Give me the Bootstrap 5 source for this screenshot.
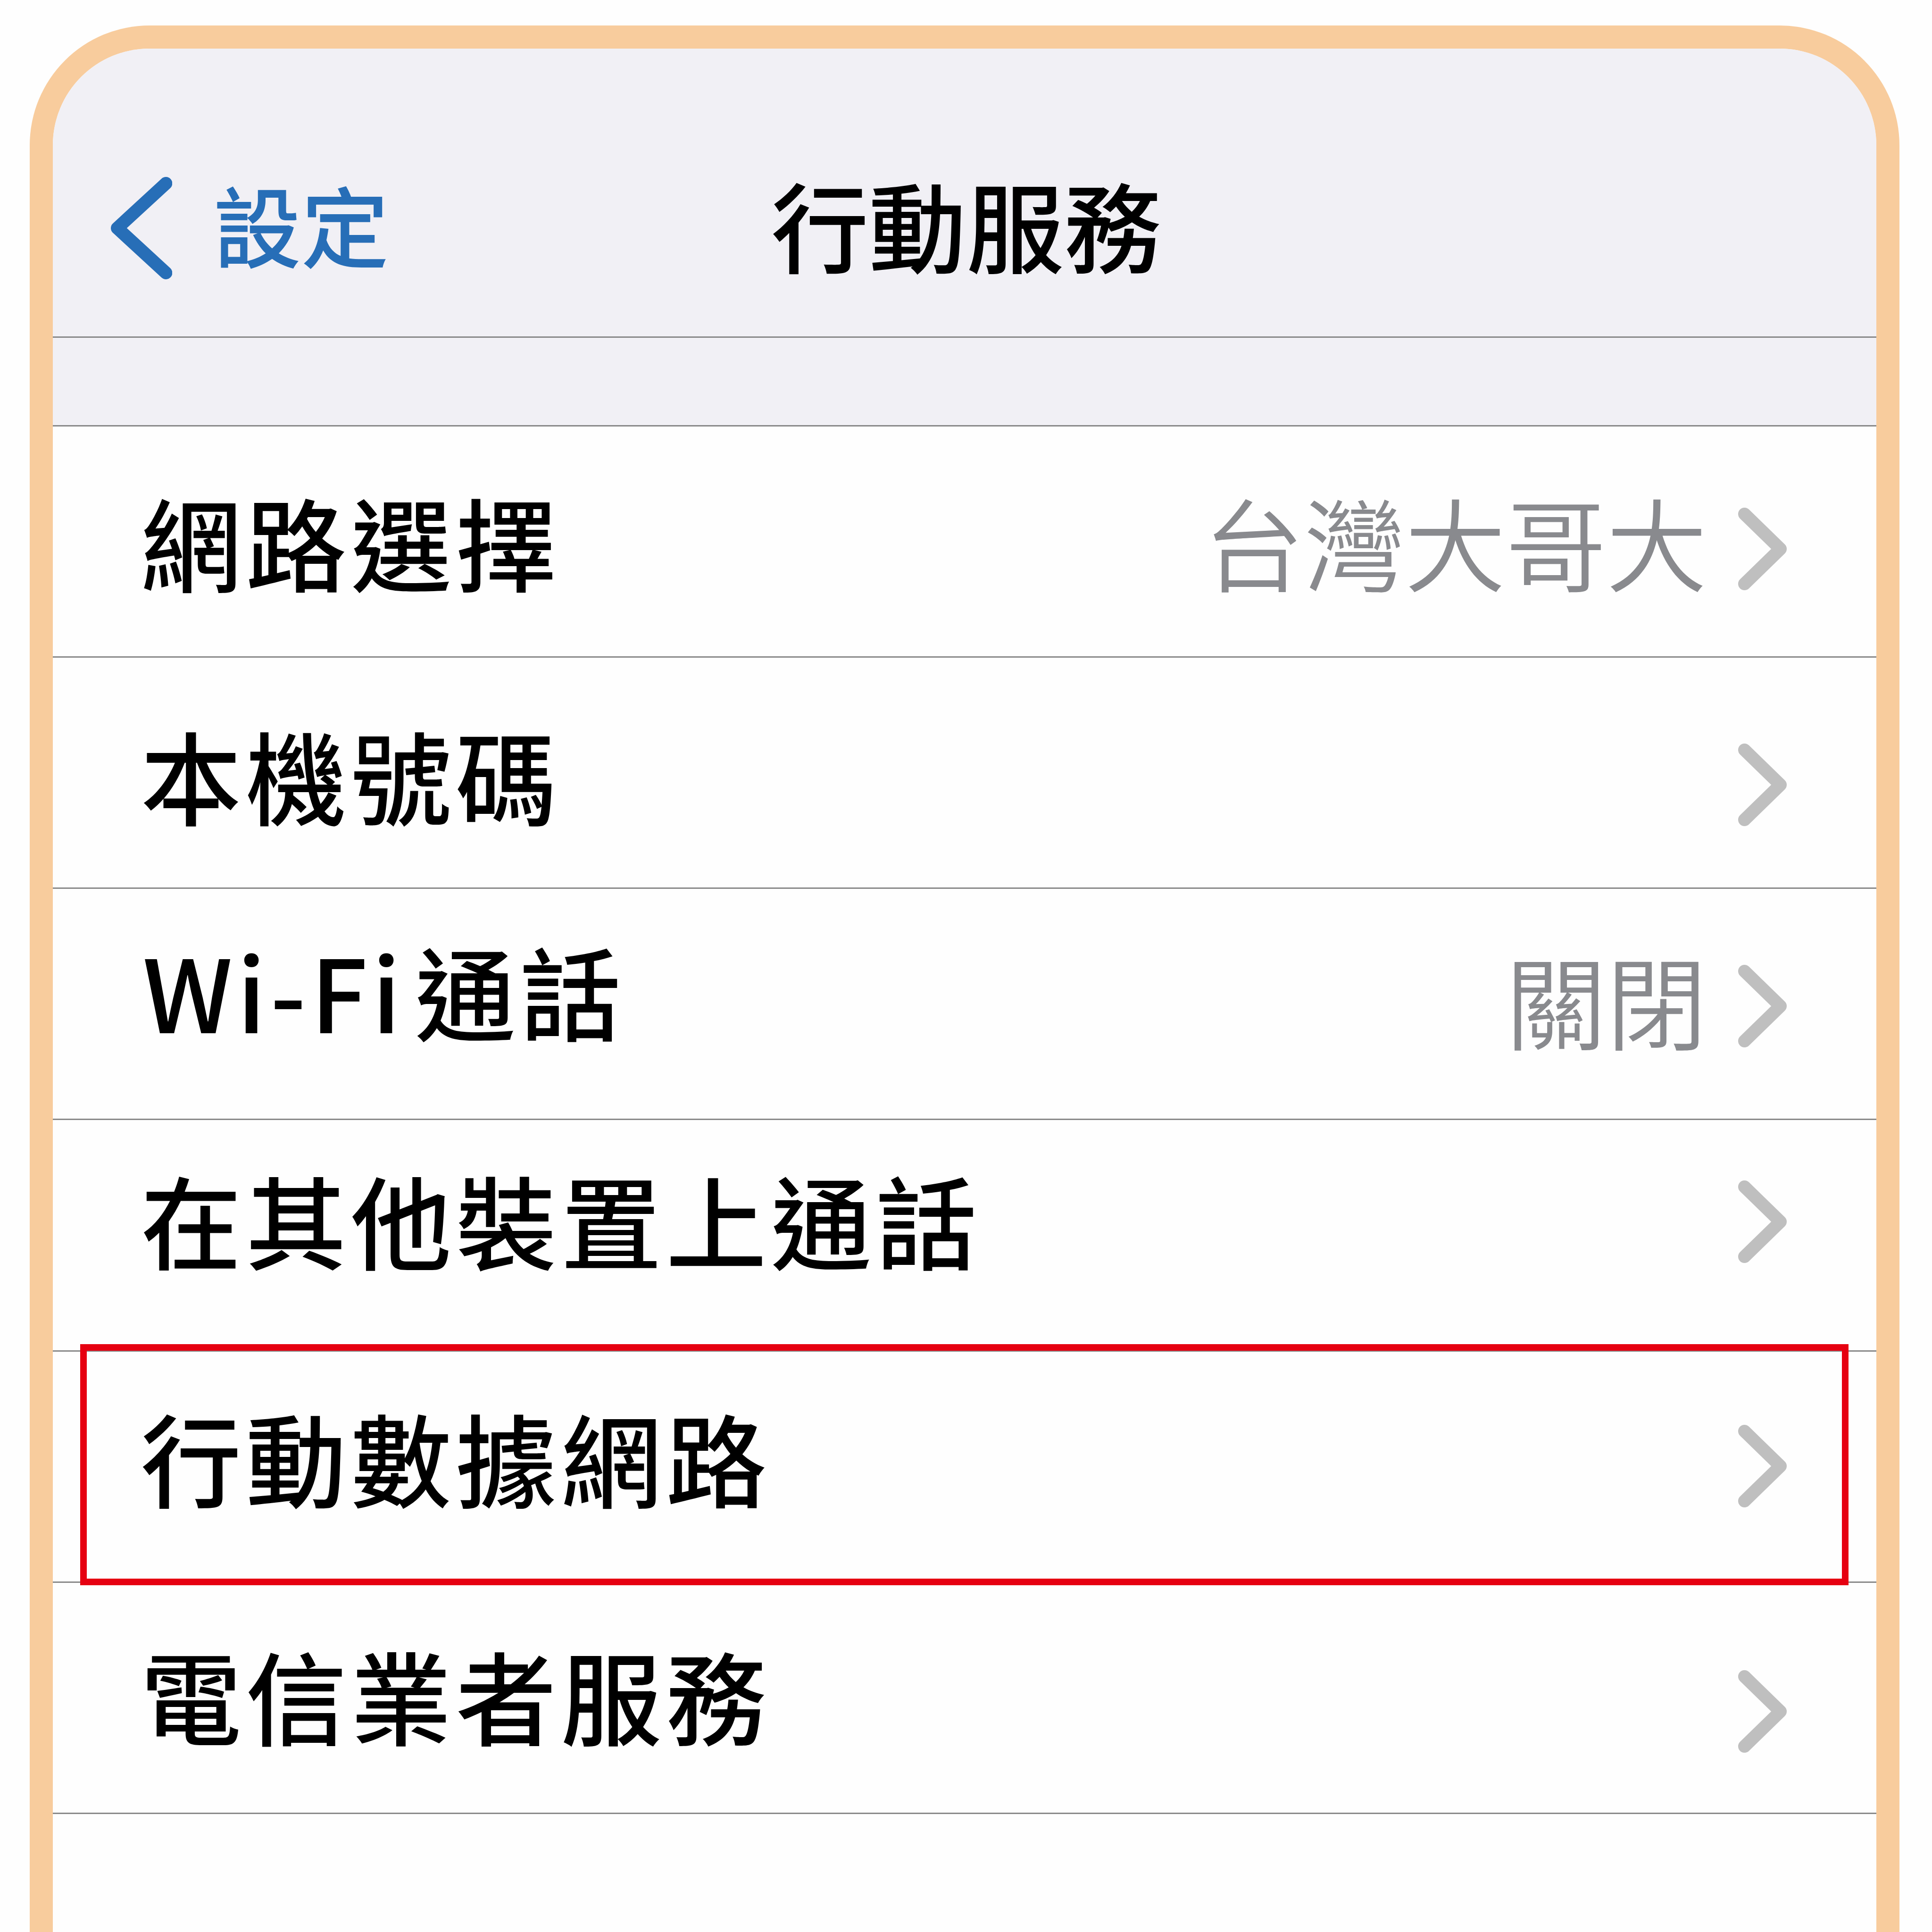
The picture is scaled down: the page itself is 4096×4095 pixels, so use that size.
<!DOCTYPE html>
<html lang="zh-Hant">
<head>
    <meta charset="UTF-8">
    <meta name="viewport" content="width=device-width, initial-scale=1.0">
    <title>行動服務</title>
    <!-- Bootstrap CSS -->
    <link href="https://cdn.jsdelivr.net/npm/bootstrap@5.3.0/dist/css/bootstrap.min.css" rel="stylesheet">
    <style>
        body {
            height: 4095px;
            background: #fefefe;
            font-family: "Noto Sans CJK TC", sans-serif;
            color: #000;
            line-height: 1;
        }
        .phone {
            height: 4200px;
            margin: 54.4px 69.5px 0 63.2px;
            border: 49.2px solid #f8cc9d;
            border-bottom: 0;
            border-radius: 254px 254px 0 0;
            background: #fefefe;
        }
        .topbar {
            height: 612.5px;
            background: #f1f0f5;
            border-bottom: 3px solid #898989;
            border-radius: 205px 205px 0 0;
        }
        .side { flex: 1 1 0; }
        .back-link {
            color: #276eb7;
            font-size: 186px;
            font-weight: 500;
        }
        .back-link svg { margin: 271.5px 0 0 122.8px; }
        .back-link span { margin: 277px 0 0 87px; }
        .page-title {
            font-size: 207px;
            font-weight: 500;
            margin: 267px 0 0 8px;
        }
        .band {
            height: 188px;
            background: #f1f0f5;
            border-bottom: 3px solid #898989;
        }
        .setting {
            height: 490.2px;
            padding: 0 189.3px 0 186px;
            background: #fefefe;
            color: #000;
            border: 0 solid #898989;
            border-bottom-width: 3px !important;
            font-size: 213.6px;
        }
        .setting-name {
            font-weight: 500;
            letter-spacing: 9.1px;
            margin-top: var(--name-y);
        }
        .latin { margin: 0 21px 0 4px; }
        .setting-value {
            color: #898a8e;
            font-weight: 350;
            margin: var(--value-y) 66px 0 auto;
        }
        .arrow {
            flex: none;
            margin-top: var(--arrow-y);
        }
        .r1 { --name-y: 135px; --value-y: 135px; --arrow-y: 172.6px; }
        .r2 { --name-y: 140px; --arrow-y: 182.4px; }
        .r3 { --name-y: 107px; --value-y: 126px; --arrow-y: 160.5px; }
        .r4 { --name-y: 102px; --arrow-y: 128px; }
        .r5 { --name-y: 115px; --arrow-y: 155.7px; }
        .r6 { --name-y: 129px; --arrow-y: 185px; }
        /* red frame drawn over the row and its two lines */
        .highlight {
            top: -15.4px;
            left: 58.1px;
            right: 58.4px;
            height: 510.7px;
            border: 14px solid #e60011;
            z-index: 3;
        }
    </style>
</head>
<body class="overflow-hidden">
    <div class="phone">
        <!-- Top bar -->
        <header class="topbar d-flex align-items-start">
            <div class="side back-link d-flex align-items-start">
                <svg width="130.4" height="217" viewBox="0 0 130.4 217" fill="none" stroke="currentColor" stroke-width="27.4" stroke-linecap="round" stroke-linejoin="round">
                    <path d="M116.7 13.7L13.7 108.5L116.7 203.3"/>
                </svg>
                <span>設定</span>
            </div>
            <div class="page-title">行動服務</div>
            <div class="side"></div>
        </header>
        <div class="band"></div>

        <!-- Settings -->
        <div class="list-group list-group-flush">
            <div class="list-group-item setting r1 d-flex align-items-start">
                <div class="setting-name">網路選擇</div>
                <div class="setting-value">台灣大哥大</div>
                <svg class="arrow" width="103" height="175" viewBox="0 0 103 175" fill="none" stroke="#bfbfbf" stroke-width="27" stroke-linecap="round" stroke-linejoin="round"><path d="M13.5 13.5L89.5 87.5L13.5 161.5"/></svg>
            </div>
            <div class="list-group-item setting r2 d-flex align-items-start">
                <div class="setting-name me-auto">本機號碼</div>
                <svg class="arrow" width="103" height="175" viewBox="0 0 103 175" fill="none" stroke="#bfbfbf" stroke-width="27" stroke-linecap="round" stroke-linejoin="round"><path d="M13.5 13.5L89.5 87.5L13.5 161.5"/></svg>
            </div>
            <div class="list-group-item setting r3 d-flex align-items-start">
                <div class="setting-name"><span class="latin">Wi-Fi</span>通話</div>
                <div class="setting-value">關閉</div>
                <svg class="arrow" width="103" height="175" viewBox="0 0 103 175" fill="none" stroke="#bfbfbf" stroke-width="27" stroke-linecap="round" stroke-linejoin="round"><path d="M13.5 13.5L89.5 87.5L13.5 161.5"/></svg>
            </div>
            <div class="list-group-item setting r4 d-flex align-items-start">
                <div class="setting-name me-auto">在其他裝置上通話</div>
                <svg class="arrow" width="103" height="175" viewBox="0 0 103 175" fill="none" stroke="#bfbfbf" stroke-width="27" stroke-linecap="round" stroke-linejoin="round"><path d="M13.5 13.5L89.5 87.5L13.5 161.5"/></svg>
            </div>
            <div class="list-group-item setting r5 d-flex align-items-start position-relative">
                <div class="highlight position-absolute"></div>
                <div class="setting-name me-auto">行動數據網路</div>
                <svg class="arrow" width="103" height="175" viewBox="0 0 103 175" fill="none" stroke="#bfbfbf" stroke-width="27" stroke-linecap="round" stroke-linejoin="round"><path d="M13.5 13.5L89.5 87.5L13.5 161.5"/></svg>
            </div>
            <div class="list-group-item setting r6 d-flex align-items-start">
                <div class="setting-name me-auto">電信業者服務</div>
                <svg class="arrow" width="103" height="175" viewBox="0 0 103 175" fill="none" stroke="#bfbfbf" stroke-width="27" stroke-linecap="round" stroke-linejoin="round"><path d="M13.5 13.5L89.5 87.5L13.5 161.5"/></svg>
            </div>
        </div>
    </div>

    <!-- Bootstrap JS -->
    <script src="https://cdn.jsdelivr.net/npm/bootstrap@5.3.0/dist/js/bootstrap.bundle.min.js"></script>
</body>
</html>
